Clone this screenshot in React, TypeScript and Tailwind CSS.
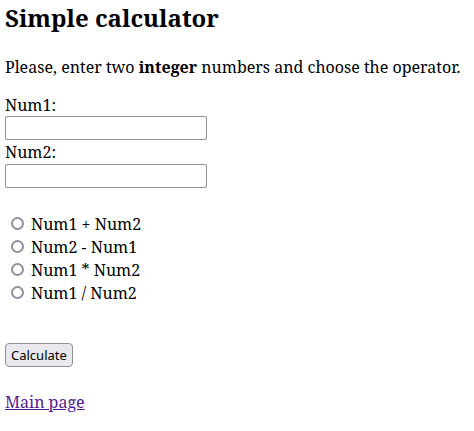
import React from "react";

export default function App() {
  const ops = ["Num1 + Num2", "Num2 - Num1", "Num1 * Num2", "Num1 / Num2"];
  return (
    <div className="px-[5px] pt-[1px] font-['Noto_Serif','DejaVu_Serif',serif] text-black bg-white text-[16px]">
      <h2 className="text-[24px] font-bold leading-[33px]">Simple calculator</h2>
      <p className="mt-[22px] leading-[22px]">
        Please, enter two <b>integer</b> numbers and choose the operator.
      </p>
      <div className="mt-[16px] leading-[22px]">Num1:</div>
      <input className="block w-[202px] h-[24px] border border-[#8f8f9d] rounded-[2px] bg-white" />
      <div className="mt-[0px] leading-[24px]">Num2:</div>
      <input className="block w-[202px] h-[24px] border border-[#8f8f9d] rounded-[2px] bg-white" />
      <div className="mt-[24px] flex flex-col">
        {ops.map((o) => (
          <label key={o} className="flex items-center h-[23px]">
            <span className="ml-[6px] w-[13px] h-[13px] rounded-full border-2 border-[#8f8f9d] bg-white" />
            <span className="ml-[7px]">{o}</span>
          </label>
        ))}
      </div>
      <button className="mt-[39px] block h-[24px] px-[5px] border border-[#8f8f9d] rounded-[4px] bg-[#e9e9ed] font-['Noto_Sans',sans-serif] text-[13px] text-black leading-none">
        Calculate
      </button>
      <div className="mt-[24px] leading-[22px]">
        <a href="#" className="text-[#551a8b] underline">Main page</a>
      </div>
    </div>
  );
}
